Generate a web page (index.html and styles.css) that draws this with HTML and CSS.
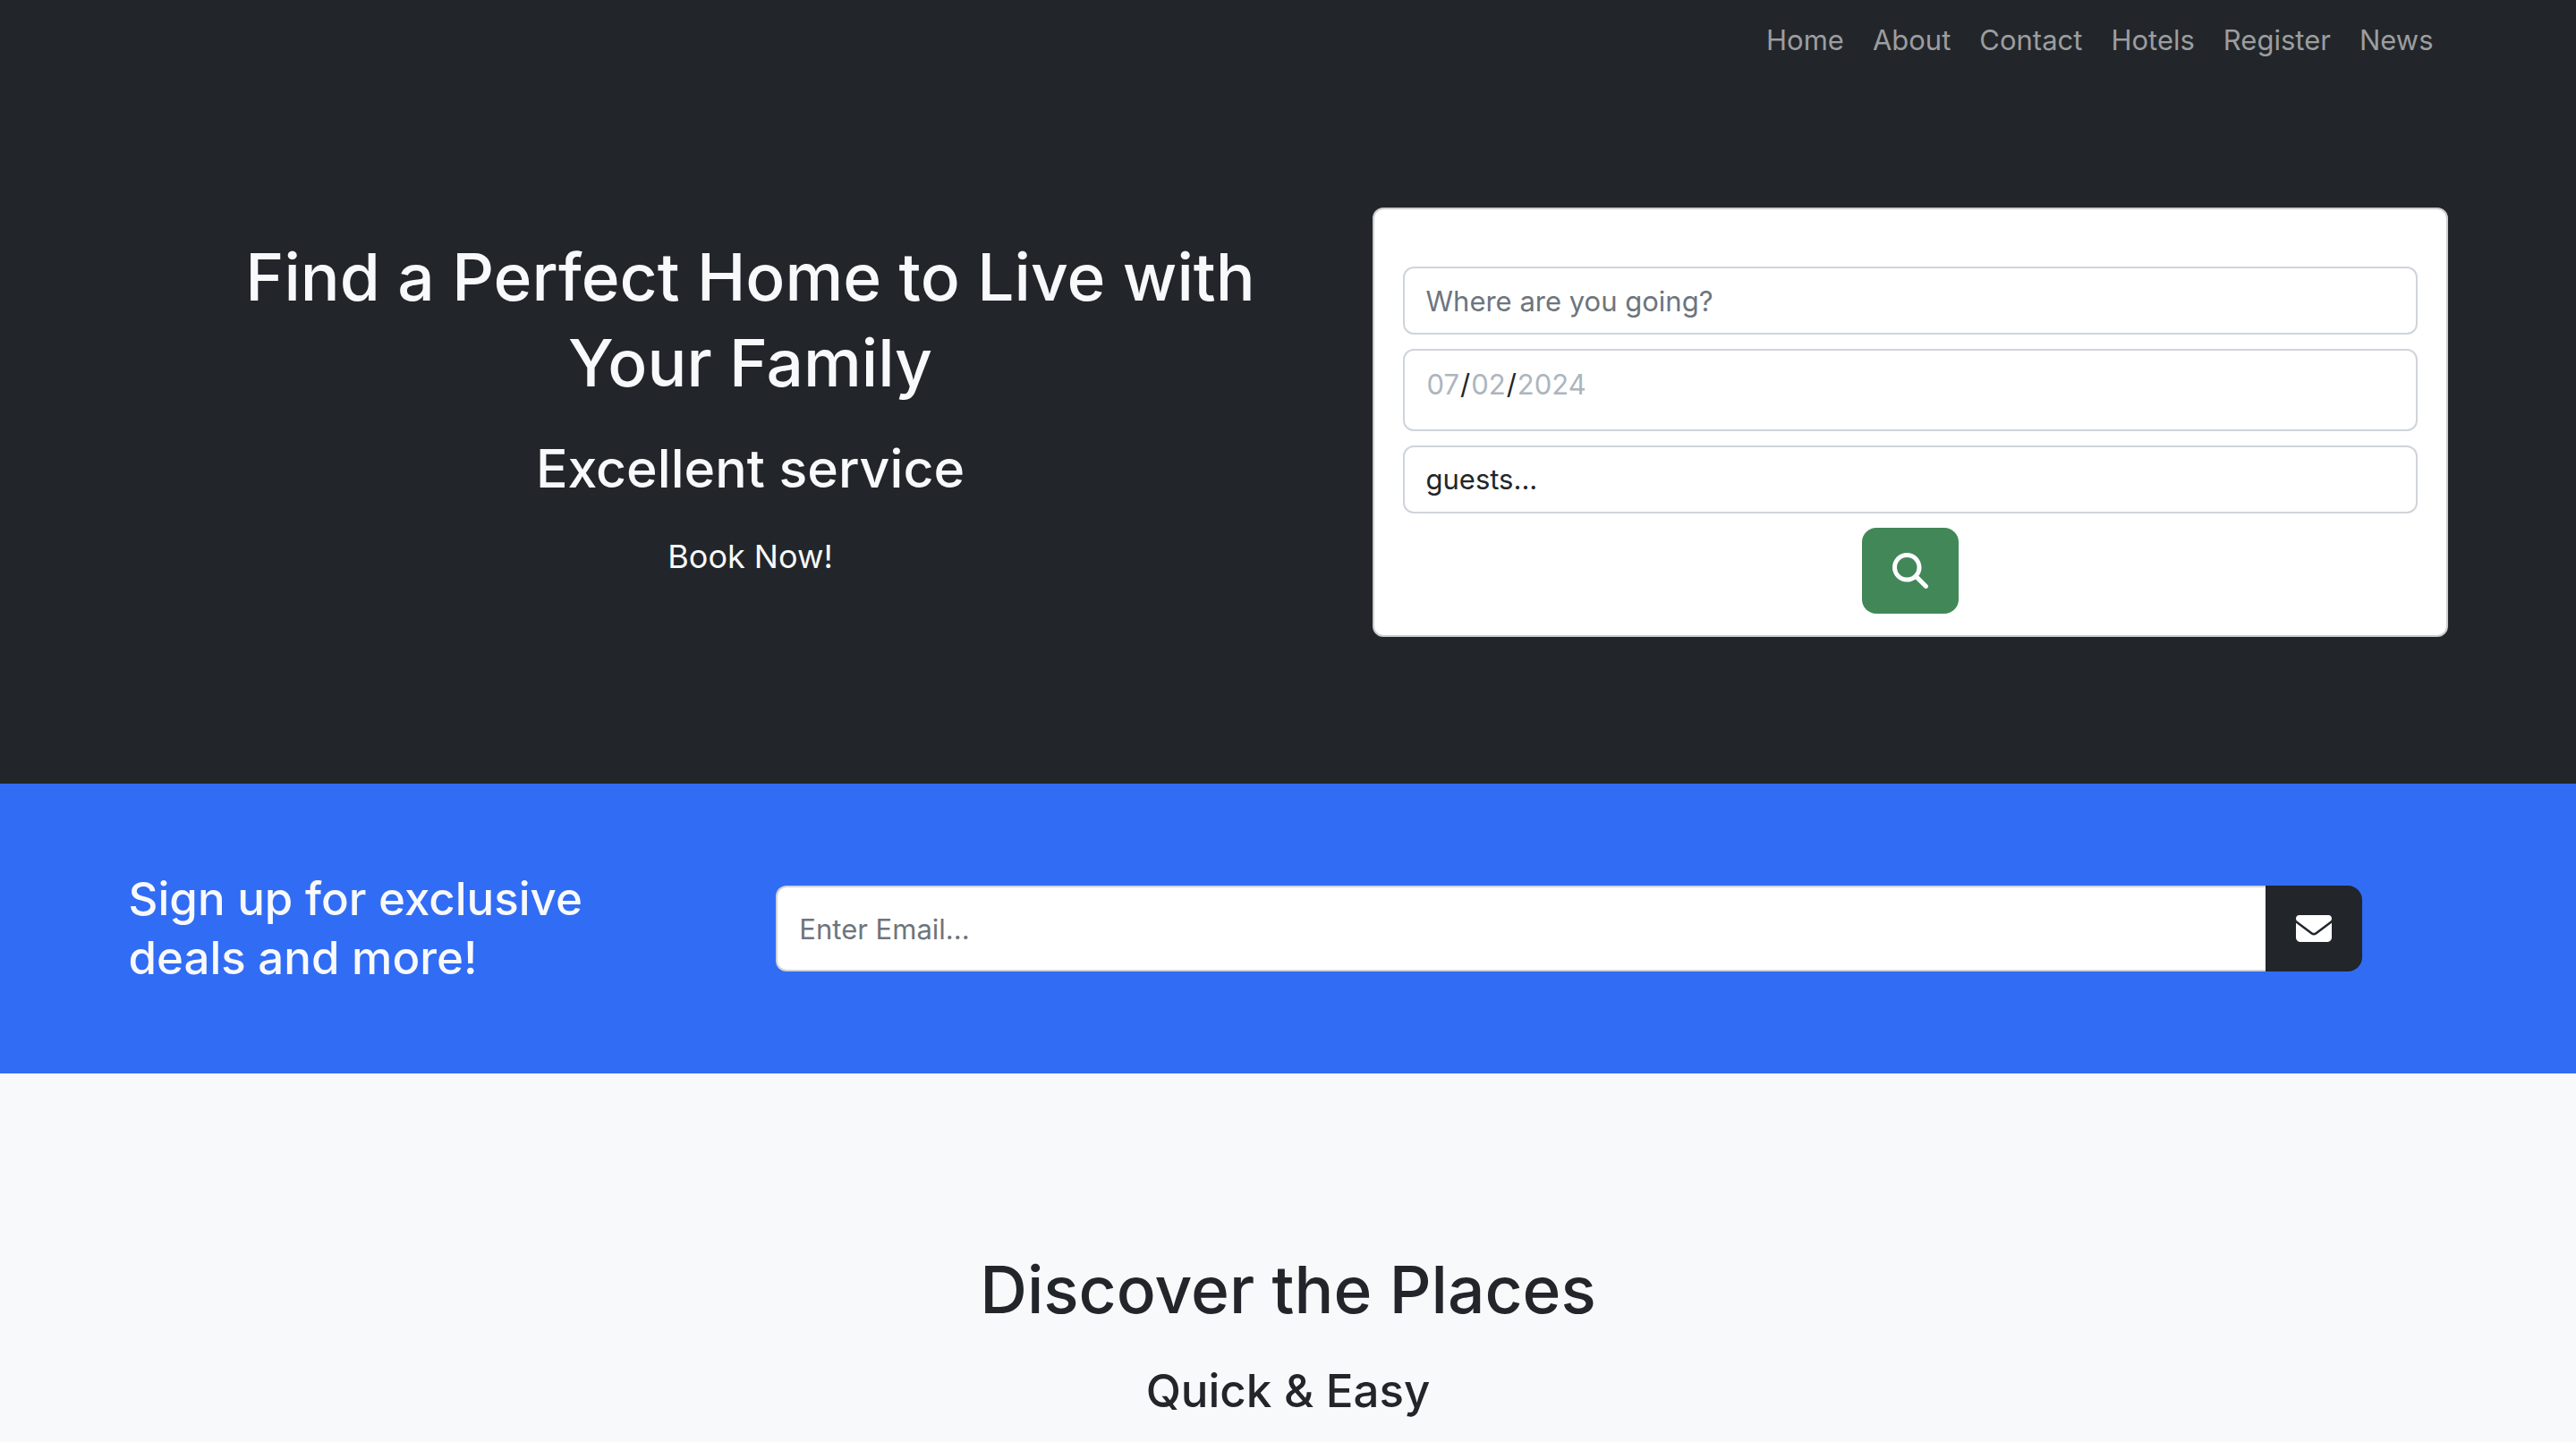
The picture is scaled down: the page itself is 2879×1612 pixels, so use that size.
FILE: index.html
```html
<!DOCTYPE html>
<html lang="en-US">
<head>
  <meta charset="utf-8">
  <meta name="viewport" content="width=device-width, initial-scale=1">
  <title>Find a Perfect Home</title>
  <link rel="stylesheet" href="styles.css">
</head>
<body>
  <header class="site-header">
    <nav class="container navbar" aria-label="Main">
      <a class="nav-link" href="#home">Home</a>
      <a class="nav-link" href="#about">About</a>
      <a class="nav-link" href="#contact">Contact</a>
      <a class="nav-link" href="#hotels">Hotels</a>
      <a class="nav-link" href="#register">Register</a>
      <a class="nav-link" href="#news">News</a>
    </nav>
  </header>

  <section class="hero" id="home">
    <div class="container hero-row">
      <div class="hero-text">
        <h1 class="title">Find a Perfect Home to Live with Your Family</h1>
        <h2 class="subtitle">Excellent service</h2>
        <p class="lead">Book Now!</p>
      </div>
      <div class="hero-form">
        <form class="card">
          <input class="field" type="text" placeholder="Where are you going?" aria-label="Destination">
          <input class="field field-date" type="date" value="2024-07-02" aria-label="Date">
          <select class="field" aria-label="Guests">
            <option>guests...</option>
            <option>1</option>
            <option>2</option>
            <option>3</option>
          </select>
          <button class="btn btn-search" type="button" aria-label="Search">
            <svg class="icon" viewBox="0 0 512 512" aria-hidden="true"><path d="M416 208c0 45.900-14.900 88.300-40 122.700L502.600 457.400c12.500 12.500 12.500 32.800 0 45.300s-32.800 12.500-45.300 0L330.700 376c-34.400 25.200-76.800 40-122.700 40C93.100 416 0 322.900 0 208S93.100 0 208 0S416 93.100 416 208zM208 352a144 144 0 1 0 0-288 144 144 0 1 0 0 288z"/></svg>
          </button>
        </form>
      </div>
    </div>
  </section>

  <section class="signup">
    <div class="container signup-row">
      <h3 class="heading signup-heading">Sign up for exclusive deals and more!</h3>
      <form class="email-group">
        <input class="field field-email" type="email" placeholder="Enter Email..." aria-label="Email">
        <button class="btn btn-mail" type="button" aria-label="Sign up">
          <svg class="icon" viewBox="0 0 512 512" aria-hidden="true"><path d="M48 64C21.500 64 0 85.500 0 112c0 15.100 7.100 29.300 19.200 38.400L236.800 313.600c11.400 8.500 27 8.500 38.400 0L492.800 150.400c12.100-9.100 19.200-23.300 19.200-38.400c0-26.500-21.500-48-48-48H48zM0 176V384c0 35.300 28.700 64 64 64H448c35.300 0 64-28.700 64-64V176L294.400 339.200c-22.800 17.100-54 17.100-76.800 0L0 176z"/></svg>
        </button>
      </form>
    </div>
  </section>

  <section class="places">
    <div class="container">
      <h2 class="title">Discover the Places</h2>
      <h3 class="heading">Quick &amp; Easy</h3>
    </div>
  </section>
</body>
</html>
```
FILE: styles.css
```css
:root {
  --dark: #22262a;
  --light: #f8f9fb;
  --blue: #316cf5;
  --green: #428758;
}

* {
  box-sizing: border-box;
}

body {
  margin: 0;
  background: var(--light);
  color: var(--dark);
  font-family: Inter, "Liberation Sans", sans-serif;
  font-size: 31px;
  line-height: 48px;
}

h1, h2, h3, p {
  margin: 0;
  font-weight: 500;
}

.container {
  width: 100%;
  max-width: 2640px;
  margin: 0 auto;
  padding: 0 24px;
}

.site-header,
.hero {
  background: var(--dark);
  color: var(--light);
}

.navbar {
  display: flex;
  justify-content: flex-end;
  padding-top: 21px;
  padding-bottom: 19px;
}

.nav-link {
  padding: 0 16px;
  color: #9c9d9f;
  text-decoration: none;
}

.title {
  font-size: 73px;
  line-height: 96px;
}

.subtitle {
  font-size: 59px;
  line-height: 76px;
}

.heading {
  font-size: 51px;
  line-height: 66px;
}

.lead {
  font-size: 36px;
  font-weight: 400;
  line-height: 56px;
}

.hero {
  padding: 144px 0 164px;
}

.hero-row {
  display: flex;
}

.hero-text {
  display: flex;
  flex: 1 1 0;
  flex-direction: column;
  gap: 32px;
  padding: 30px 94px 0;
  text-align: center;
}

.hero-form {
  flex: 1 1 0;
}

.card {
  display: flex;
  flex-direction: column;
  gap: 16px;
  padding: 64px 32px 24px;
  border: 2px solid #cccdcf;
  border-radius: 12px;
  background: #fff;
}

.field {
  width: 100%;
  height: 76px;
  padding: 12px 24px;
  border: 2px solid #cfd4da;
  border-radius: 12px;
  background: #fff;
  color: var(--dark);
  font: inherit;
  appearance: none;
}

.field::placeholder {
  color: #6d757d;
  opacity: 1;
}

.field-date {
  height: 92px;
  padding-bottom: 24px;
}

.field-date::-webkit-calendar-picker-indicator {
  display: none;
}

.field-date::-webkit-datetime-edit-month-field,
.field-date::-webkit-datetime-edit-day-field,
.field-date::-webkit-datetime-edit-year-field {
  color: #adb5bd;
}

.btn {
  display: flex;
  align-items: center;
  justify-content: center;
  width: 108px;
  height: 96px;
  padding: 0;
  border: 0;
  border-radius: 16px;
  color: #fff;
}

.btn-search {
  align-self: center;
  background: var(--green);
}

.btn-mail {
  flex: none;
  border-radius: 0 16px 16px 0;
  background: var(--dark);
}

.icon {
  width: 40px;
  height: 40px;
  fill: currentColor;
}

.signup {
  padding: 96px 0;
  background: var(--blue);
  color: var(--light);
}

.signup-row {
  display: flex;
  align-items: center;
  justify-content: space-between;
  padding-right: 120px;
}

.signup-heading {
  width: 24%;
}

.email-group {
  display: flex;
  width: 71%;
}

.field-email {
  flex: 1;
  height: 96px;
  border-right: 0;
  border-radius: 12px 0 0 12px;
}

.places {
  padding: 194px 0 96px;
  text-align: center;
}

.places .container {
  display: grid;
  gap: 32px;
}
```
